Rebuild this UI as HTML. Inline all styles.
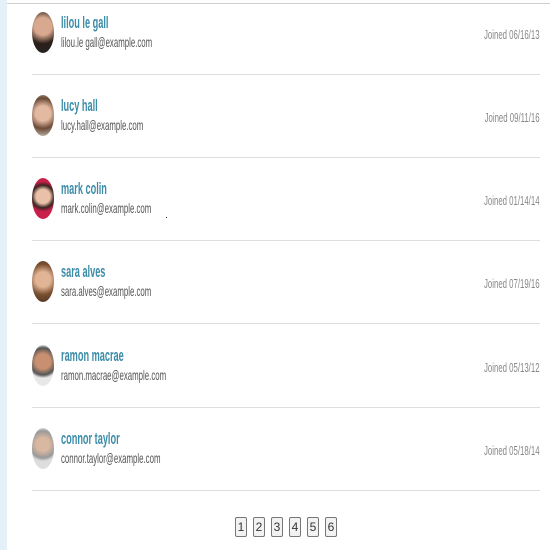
<!DOCTYPE html>
<html><head><style>
body{margin:0;width:550px;height:550px;background:#fff;position:relative;overflow:hidden;font-family:"Liberation Sans",sans-serif}
.strip{position:absolute;left:0;top:0;width:7px;height:550px;background:#e4f1f9}
.top{position:absolute;left:7px;top:3px;right:0;height:1px;background:#d0d0d0}
.row{position:absolute;left:32px;width:508px;height:83px}
.av{position:absolute;left:0;top:20px;width:22px;height:41px;border-radius:50%;overflow:hidden}
.n{position:absolute;left:29px;top:21px;font-size:17px;font-weight:bold;color:#3a8ca8;transform:scaleX(.54);transform-origin:left;white-space:nowrap}
.e{position:absolute;left:29px;top:42px;font-size:14px;color:#555;transform:scaleX(.56);transform-origin:left;white-space:nowrap}
.dot{position:absolute;left:166px;top:217px;width:1px;height:1px;background:#333}
.j{position:absolute;right:0;top:35px;font-size:13px;color:#888;transform:scaleX(.6);transform-origin:right;white-space:nowrap}
.sep{position:absolute;left:0;right:0;bottom:0;height:1px;background:#dedede}
.pg{position:absolute;top:517px;left:235px;display:flex;gap:6px}
.pg span{height:20px;border:1px solid #777;border-radius:2px;background:#f2f2f2;font-size:12px;line-height:19px;text-align:center;color:#333;box-sizing:border-box;width:12px}
</style></head><body>
<div class="strip"></div><div class="top"></div>
<div class="row" style="top:-8px"><div class="av" style="background:radial-gradient(circle at 50% 35%,#d9a98f 30%,#2b1f1a 60%,#222)"></div><div class="n">lilou le gall</div><div class="e">lilou.le gall@example.com</div><div class="j">Joined 06/16/13</div><div class="sep"></div></div>
<div class="row" style="top:75px"><div class="av" style="background:radial-gradient(circle at 50% 45%,#e3b9a2 30%,#6b4a36 60%,#cfc8c0)"></div><div class="n">lucy hall</div><div class="e">lucy.hall@example.com</div><div class="j">Joined 09/11/16</div><div class="sep"></div></div>
<div class="row" style="top:158px"><div class="av" style="background:radial-gradient(circle at 50% 45%,#e9c0a8 28%,#3a2420 45%,#c8204a 60%)"></div><div class="n">mark colin</div><div class="e">mark.colin@example.com</div><div class="j">Joined 01/14/14</div><div class="sep"></div></div>
<div class="row" style="top:241px"><div class="av" style="background:radial-gradient(circle at 50% 45%,#e2b496 30%,#7a5030 60%,#4a3020)"></div><div class="n">sara alves</div><div class="e">sara.alves@example.com</div><div class="j">Joined 07/19/16</div><div class="sep"></div></div>
<div class="row" style="top:325px"><div class="av" style="background:radial-gradient(circle at 50% 40%,#c89070 28%,#555 50%,#e8e8e8 62%)"></div><div class="n">ramon macrae</div><div class="e">ramon.macrae@example.com</div><div class="j">Joined 05/13/12</div><div class="sep"></div></div>
<div class="row" style="top:408px"><div class="av" style="background:radial-gradient(circle at 50% 40%,#d8b8a0 25%,#999 50%,#ddd 62%)"></div><div class="n">connor taylor</div><div class="e">connor.taylor@example.com</div><div class="j">Joined 05/18/14</div><div class="sep"></div></div>
<div class="dot"></div>
<div class="pg"><span>1</span><span>2</span><span>3</span><span>4</span><span>5</span><span>6</span></div>
</body></html>
